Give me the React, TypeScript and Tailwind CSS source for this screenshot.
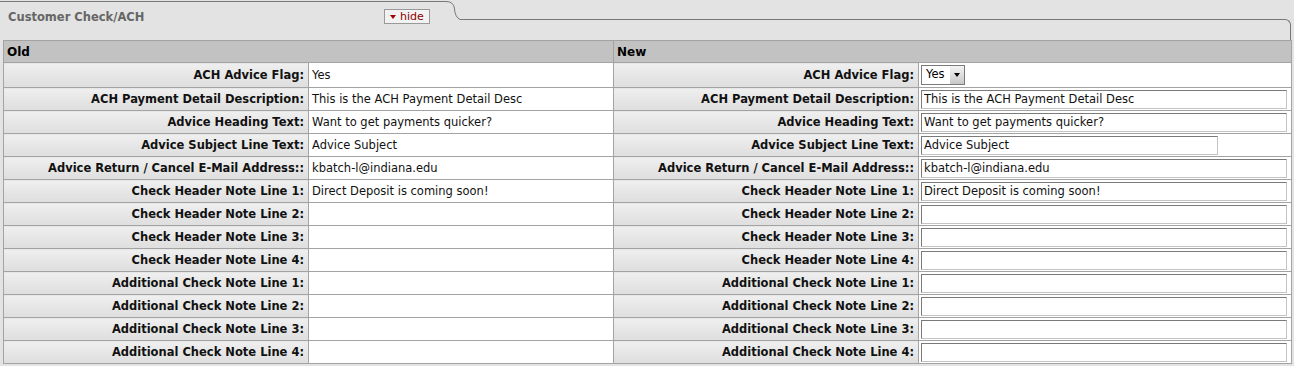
import { useState } from "react";

const rows: { label: string; old: string; value: string; kind?: "select" | "short" }[] = [
  { label: "ACH Advice Flag:", old: "Yes", value: "Yes", kind: "select" },
  { label: "ACH Payment Detail Description:", old: "This is the ACH Payment Detail Desc", value: "This is the ACH Payment Detail Desc" },
  { label: "Advice Heading Text:", old: "Want to get payments quicker?", value: "Want to get payments quicker?" },
  { label: "Advice Subject Line Text:", old: "Advice Subject", value: "Advice Subject", kind: "short" },
  { label: "Advice Return / Cancel E-Mail Address::", old: "kbatch-l@indiana.edu", value: "kbatch-l@indiana.edu" },
  { label: "Check Header Note Line 1:", old: "Direct Deposit is coming soon!", value: "Direct Deposit is coming soon!" },
  { label: "Check Header Note Line 2:", old: "", value: "" },
  { label: "Check Header Note Line 3:", old: "", value: "" },
  { label: "Check Header Note Line 4:", old: "", value: "" },
  { label: "Additional Check Note Line 1:", old: "", value: "" },
  { label: "Additional Check Note Line 2:", old: "", value: "" },
  { label: "Additional Check Note Line 3:", old: "", value: "" },
  { label: "Additional Check Note Line 4:", old: "", value: "" },
];

const labelCell =
  "border border-[#a3a3a3] bg-gradient-to-b from-[#efefef] to-[#dedede] px-1 py-0 text-right text-[11.5px] font-bold leading-[21px] text-[#111] whitespace-nowrap";
const valueCell =
  "border border-[#a3a3a3] bg-white px-[3px] py-0 text-[11.5px] leading-[21px] text-[#111] whitespace-nowrap";
const inputCls =
  "block h-[19px] border border-t-[#7a7a7a] border-l-[#7a7a7a] border-r-[#c4c4c4] border-b-[#c4c4c4] bg-white px-[2px] text-[11.5px] text-[#111] outline-none";

function Field({ value, kind }: { value: string; kind?: "select" | "short" }) {
  const [v, setV] = useState(value);
  if (kind === "select") {
    return (
      <div className="flex h-[20px] w-[44px] items-center border border-[#7a7a7a] bg-white">
        <span className="flex-1 pl-[4px] text-[11.5px]">Yes</span>
        <span className="flex h-full w-[14px] items-center justify-center bg-gradient-to-b from-[#f4f4f4] to-[#c8c8c8]">
          <span className="h-0 w-0 border-x-[3px] border-t-[4px] border-x-transparent border-t-black" />
        </span>
      </div>
    );
  }
  return (
    <input
      value={v}
      onChange={e => setV(e.target.value)}
      className={`${inputCls} ${kind === "short" ? "w-[297px]" : "w-[366px]"}`}
    />
  );
}

export default function App() {
  return (
    <div className="h-[366px] w-[1294px] overflow-hidden bg-[#e3e3e3] font-['DejaVu_Sans',Verdana,sans-serif]">
      <div className="flex h-[40px] items-start">
        <div className="relative mt-[1px] h-[39px] w-[440px] border-t border-[#777]">
          <span className="absolute left-[8px] top-[7px] text-[11.5px] font-bold text-[#666]">Customer Check/ACH</span>
          <button className="absolute left-[384px] top-[7px] flex h-[15px] items-center gap-[4px] border border-[#999] bg-[#f2f2f2] px-[5px] text-[11px] leading-none text-[#8b0000]">
            <span className="h-0 w-0 border-x-[3.5px] border-t-[4px] border-x-transparent border-t-[#a00000]" />
            hide
          </button>
        </div>
        <svg width="24" height="21" viewBox="0 0 24 21" className="shrink-0">
          <path d="M0 1.5 H6 Q14 1.5 14.5 9 Q15 17 20 19.5 H24" fill="none" stroke="#777" strokeWidth="1" />
        </svg>
        <div className="mt-[19px] h-[21px] flex-1 rounded-tr-[6px] border-t border-r border-[#777] mr-[3px]" />
      </div>
      <div className="pl-[3px]">
        <table className="w-[1288px] table-fixed border-collapse">
          <colgroup>
            <col className="w-[305px]" />
            <col className="w-[305px]" />
            <col className="w-[305px]" />
            <col className="w-[373px]" />
          </colgroup>
          <thead>
            <tr>
              <th colSpan={2} className="h-[22px] border border-[#a3a3a3] bg-[#c2c2c2] px-[3px] py-0 text-left text-[12px] font-bold text-black">
                Old
              </th>
              <th colSpan={2} className="h-[22px] border border-[#a3a3a3] bg-[#c2c2c2] px-[3px] py-0 text-left text-[12px] font-bold text-black">
                New
              </th>
            </tr>
          </thead>
          <tbody>
            {rows.map((r, i) => (
              <tr key={r.label} className={i === 0 ? "h-[25px]" : "h-[23px]"}>
                <td className={labelCell}>{r.label}</td>
                <td className={valueCell}>{r.old}</td>
                <td className={labelCell}>{r.label}</td>
                <td className="border border-[#a3a3a3] bg-white px-[2px] py-0">
                  <Field value={r.value} kind={r.kind} />
                </td>
              </tr>
            ))}
          </tbody>
        </table>
      </div>
    </div>
  );
}
